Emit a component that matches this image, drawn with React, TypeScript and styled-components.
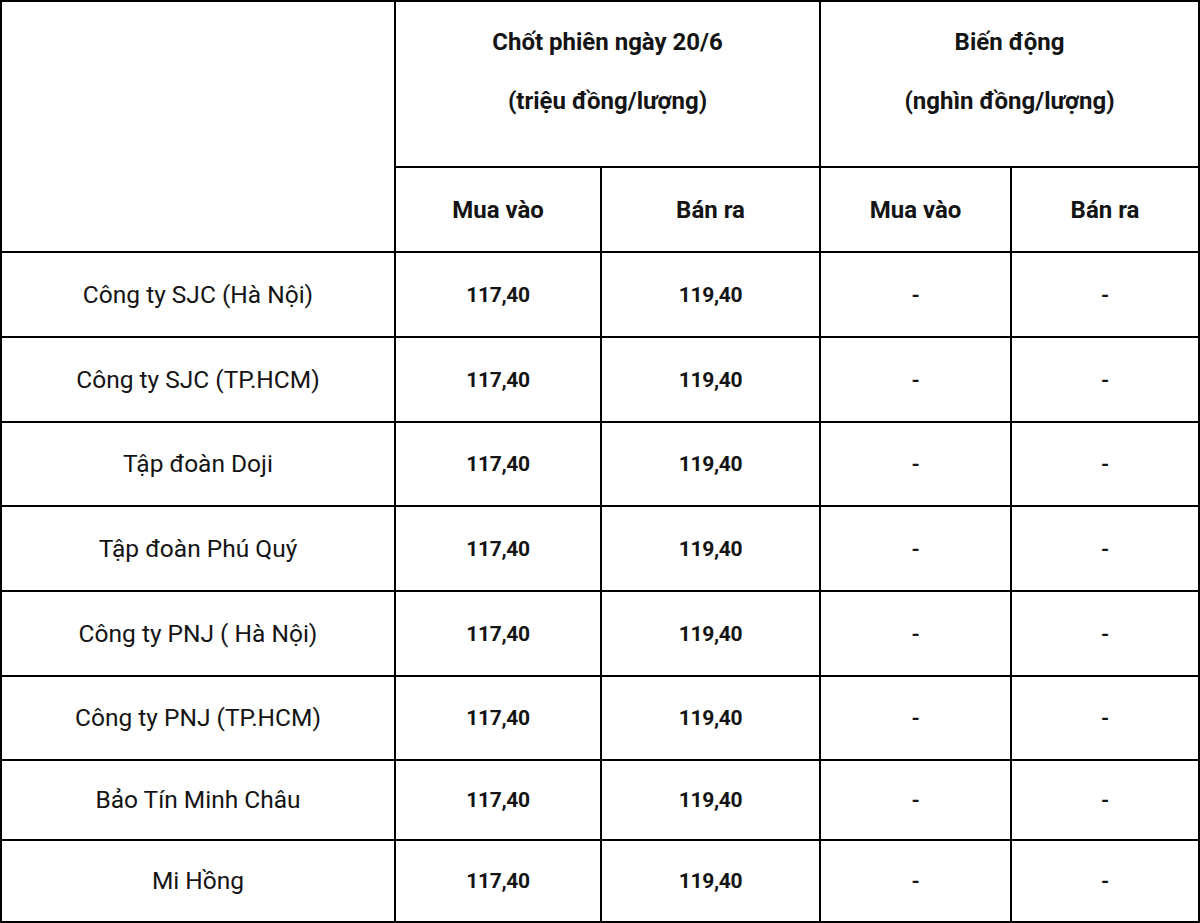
import React from "react";
import styled, { createGlobalStyle } from "styled-components";

const GlobalStyle = createGlobalStyle`
  html, body {
    margin: 0;
    padding: 0;
    background: #ffffff;
  }
  body {
    font-family: Roboto, "Noto Sans", "Liberation Sans", sans-serif;
    color: #141414;
  }
`;

const PriceTable = styled.table`
  width: 1200px;
  table-layout: fixed;
  border-collapse: separate;
  border-spacing: 0;
  border-left: 2px solid #000;
  border-top: 2px solid #000;
  font-size: 24px;
`;

const Row = styled.tr<{ $h: number }>`
  height: ${(p) => p.$h}px;
`;

const Cell = styled.td<{ $bold?: boolean; $top?: boolean }>`
  border-right: 2px solid #000;
  border-bottom: 2px solid #000;
  padding: 0;
  text-align: center;
  vertical-align: ${(p) => (p.$top ? "top" : "middle")};
  font-weight: ${(p) => (p.$bold ? 700 : 400)};
  line-height: 30px;
  white-space: nowrap;
`;

const NameCell = styled(Cell)`
  font-size: 24.5px;
`;

const NumberCell = styled(Cell)`
  font-size: 21px;
  letter-spacing: -0.3px;
`;

const HeadLines = styled.div`
  display: flex;
  flex-direction: column;
  align-items: center;
  gap: 29px;
  padding-top: 25px;
`;

interface PriceRow {
  name: string;
  buy: string;
  sell: string;
  h: number;
}

const rows: PriceRow[] = [
  { name: "Công ty SJC (Hà Nội)", buy: "117,40", sell: "119,40", h: 85 },
  { name: "Công ty SJC (TP.HCM)", buy: "117,40", sell: "119,40", h: 85 },
  { name: "Tập đoàn Doji", buy: "117,40", sell: "119,40", h: 84 },
  { name: "Tập đoàn Phú Quý", buy: "117,40", sell: "119,40", h: 85 },
  { name: "Công ty PNJ ( Hà Nội)", buy: "117,40", sell: "119,40", h: 85 },
  { name: "Công ty PNJ (TP.HCM)", buy: "117,40", sell: "119,40", h: 84 },
  { name: "Bảo Tín Minh Châu", buy: "117,40", sell: "119,40", h: 80 },
  { name: "Mi Hồng", buy: "117,40", sell: "119,40", h: 82 },
];

export default function App() {
  return (
    <>
      <GlobalStyle />
      <PriceTable>
        <colgroup>
          <col style={{ width: 394 }} />
          <col style={{ width: 206 }} />
          <col style={{ width: 219 }} />
          <col style={{ width: 191 }} />
          <col style={{ width: 188 }} />
        </colgroup>
        <tbody>
          <Row $h={166}>
            <Cell rowSpan={2} />
            <Cell colSpan={2} $bold $top>
              <HeadLines>
                <span>Chốt phiên ngày 20/6</span>
                <span>(triệu đồng/lượng)</span>
              </HeadLines>
            </Cell>
            <Cell colSpan={2} $bold $top>
              <HeadLines>
                <span>Biến động</span>
                <span>(nghìn đồng/lượng)</span>
              </HeadLines>
            </Cell>
          </Row>
          <Row $h={85}>
            <Cell $bold>Mua vào</Cell>
            <Cell $bold>Bán ra</Cell>
            <Cell $bold>Mua vào</Cell>
            <Cell $bold>Bán ra</Cell>
          </Row>
          {rows.map((r) => (
            <Row key={r.name} $h={r.h}>
              <NameCell>{r.name}</NameCell>
              <NumberCell $bold>{r.buy}</NumberCell>
              <NumberCell $bold>{r.sell}</NumberCell>
              <NumberCell $bold>-</NumberCell>
              <NumberCell $bold>-</NumberCell>
            </Row>
          ))}
        </tbody>
      </PriceTable>
    </>
  );
}
